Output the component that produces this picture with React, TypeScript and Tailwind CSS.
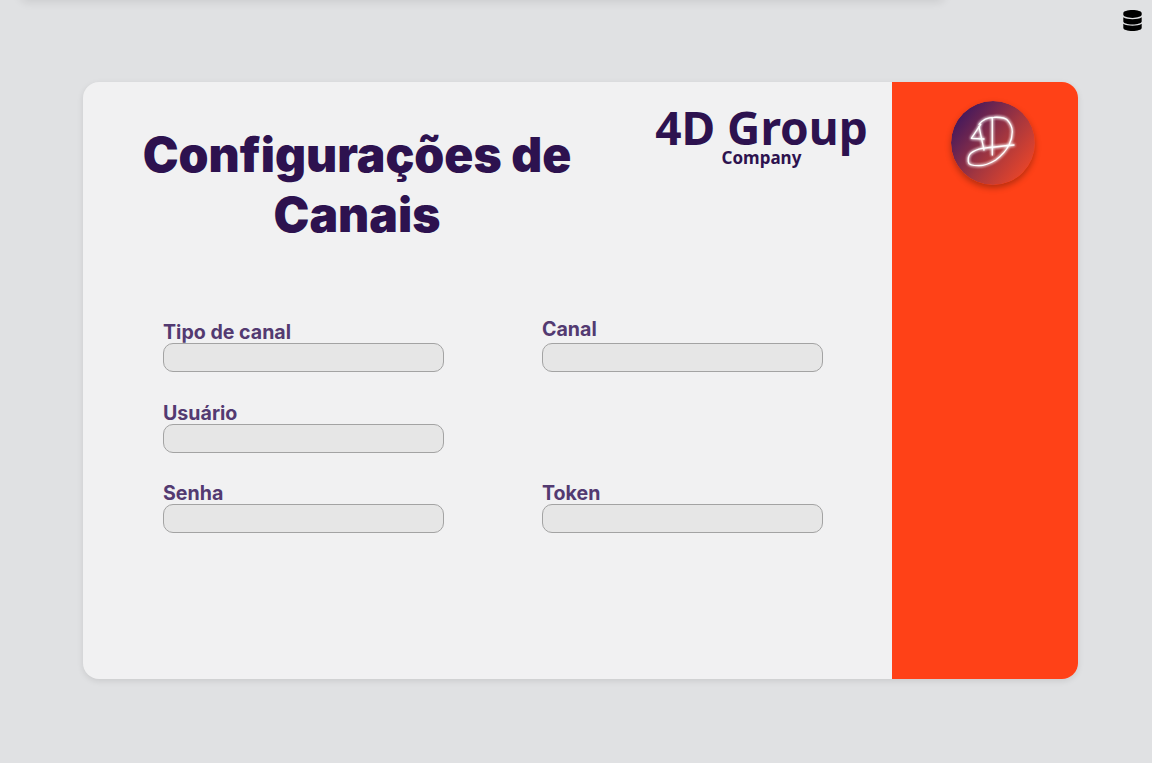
import React from 'react';
import { FaDatabase } from 'react-icons/fa';

const Field = ({ label, labelClass = '' }: { label: string; labelClass?: string }) => (
  <div className="flex flex-col w-[281px] h-[58px] justify-end">
    <label className={`text-[19.6px] font-bold leading-[22px] text-[#533a71] ${labelClass}`}>{label}</label>
    <input className="h-[29px] w-full rounded-[10px] border border-[#a3a3a3] bg-[#e6e6e6]" />
  </div>
);

const Logo4D = () => (
  <svg viewBox="0 0 84 84" className="w-[84px] h-[84px] rounded-full shadow-[0_3px_6px_rgba(0,0,0,0.3)]">
    <defs>
      <linearGradient id="disc" x1="0.08" y1="0.2" x2="0.9" y2="0.85">
        <stop offset="0" stopColor="#45195c" />
        <stop offset="0.55" stopColor="#a3363f" />
        <stop offset="1" stopColor="#e8452a" />
      </linearGradient>
      <filter id="glow" x="-30%" y="-30%" width="160%" height="160%">
        <feGaussianBlur stdDeviation="1.4" result="b" />
        <feMerge>
          <feMergeNode in="b" />
          <feMergeNode in="b" />
          <feMergeNode in="SourceGraphic" />
        </feMerge>
      </filter>
    </defs>
    <circle cx="42" cy="42" r="42" fill="url(#disc)" />
    <g fill="none" stroke="#fff" strokeWidth="1.3" strokeLinecap="round" strokeLinejoin="round" filter="url(#glow)">
      <path d="M29.7 23.3 L20.3 37.3 L33 38" />
      <path d="M28 25.7 L33 49" />
      <path d="M28 23.3 C32 18 38 16.3 43 16.3 C50 16 54 16.5 56.3 19 C60 23 61.3 26 61.3 30.7 C61.3 36 60 40 58 44 C55 50 50 55 44.7 59 C39 62.5 33 64.7 28 64.7 C22 64.7 17.3 63.5 17.3 60.7 C17 57 18 54 19.7 52.3 C23 49.5 27 48 31.3 47.3 C42 46 52 45 63 44" />
      <path d="M41.3 17.3 V54" />
    </g>
  </svg>
);

export default function App() {
  return (
    <div className="relative h-[763px] w-[1152px] overflow-hidden bg-[#e0e1e3] font-['Inter',sans-serif]">
      {/* header that is scrolled off, only its shadow is visible */}
      <div className="absolute left-[20px] top-[-10px] h-[10px] w-[925px] rounded-b-lg bg-[#e0e1e3] shadow-[0_2px_10px_rgba(0,0,0,0.1)]" />
      <div className="flex justify-end pt-[10px] pr-[10px] h-[82px]">
        <FaDatabase className="text-black w-[19px] h-[21px]" />
      </div>

      <div className="ml-[83px] flex h-[597px] w-[995px] overflow-hidden rounded-[16px] bg-[#f1f1f2] shadow-[0_2px_6px_rgba(0,0,0,0.1)]">
        <main className="w-[809px] shrink-0">
          <div className="flex h-[182px]">
            <h1 className="w-[550px] pt-[43px] text-center text-[48px] font-black leading-[60px] text-[#2d124f]">
              Configurações de Canais
            </h1>
            <div className="w-[262px] pt-[15px] text-center font-['Noto_Sans',sans-serif] font-bold text-[#2d124f]">
              <div className="text-[46px] leading-[60px]">4D Group</div>
              <div className="mt-[-10px] text-[17px] leading-[22px]">Company</div>
            </div>
          </div>
          <div className="ml-[80px] mt-[50px] grid grid-cols-[281px_281px] gap-x-[98px] gap-y-[22.5px]">
            <Field label="Tipo de canal" />
            <Field label="Canal" labelClass="mb-[3px]" />
            <Field label="Usuário" />
            <div />
            <Field label="Senha" />
            <Field label="Token" />
          </div>
        </main>
        <aside className="flex flex-1 justify-center bg-[#ff4117] pt-[19px] pl-[16px]">
          <Logo4D />
        </aside>
      </div>
    </div>
  );
}
